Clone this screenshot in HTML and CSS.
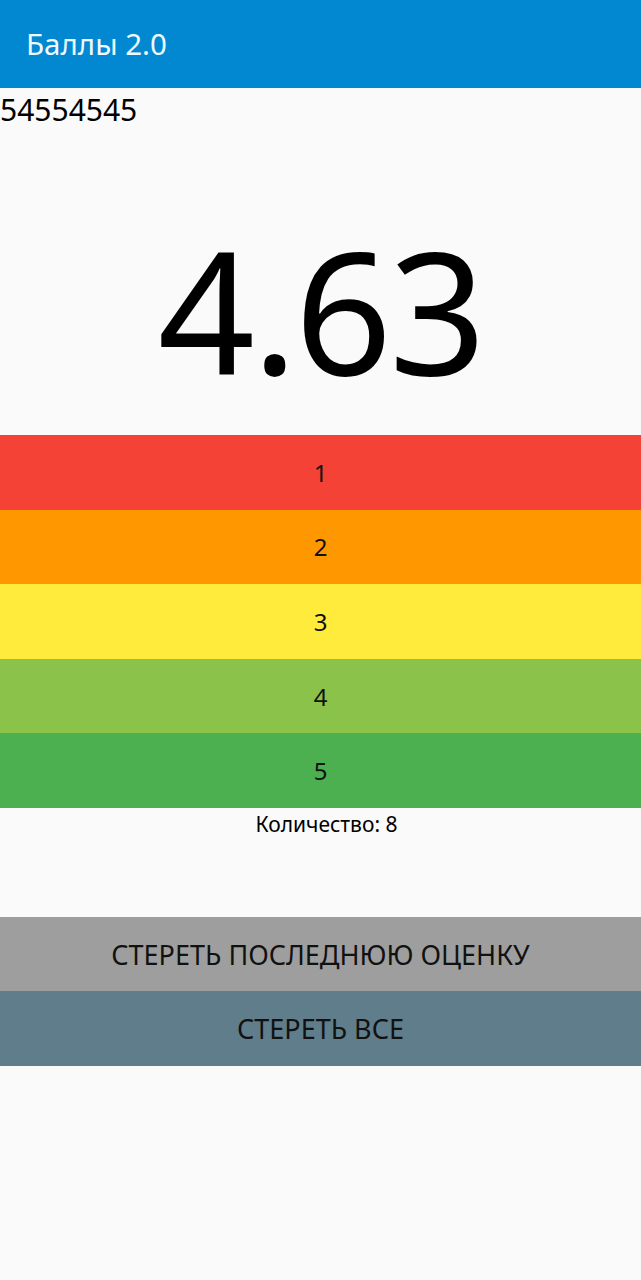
FILE: index.html
```html
<!DOCTYPE html>
<html lang="ru">
<head>
<meta charset="utf-8">
<title>Баллы 2.0</title>
<link rel="stylesheet" href="styles.css">
</head>
<body>
<header class="appbar"><span class="title">Баллы 2.0</span></header>
<main class="content">
  <div class="history">54554545</div>
  <div class="average">4.63</div>
  <div class="grades">
    <button class="grade g1">1</button>
    <button class="grade g2">2</button>
    <button class="grade g3">3</button>
    <button class="grade g4">4</button>
    <button class="grade g5">5</button>
  </div>
  <div class="count">Количество: 8</div>
  <div class="actions">
    <button class="action undo">СТЕРЕТЬ ПОСЛЕДНЮЮ ОЦЕНКУ</button>
    <button class="action clear">СТЕРЕТЬ ВСЕ</button>
  </div>
</main>
</body>
</html>
```
FILE: styles.css
```css
* { box-sizing: border-box; }
html, body { margin: 0; padding: 0; }
body {
  background: #fafafa;
  font-family: "Noto Sans", "Open Sans", sans-serif;
  color: #000;
  width: 641px;
  min-height: 1280px;
}
.appbar {
  height: 88px;
  background: #0288d1;
  display: flex;
  align-items: center;
  padding-left: 26px;
  padding-bottom: 2px;
}
.title {
  color: #eefaff;
  font-size: 29.5px;
}
.content { display: flex; flex-direction: column; }
.history {
  font-size: 30px;
  line-height: 44px;
  height: 44px;
}
.average {
  height: 303px;
  font-size: 170px;
  line-height: 1;
  text-align: center;
  padding-top: 92px;
  letter-spacing: -3px;
}
.grades { display: flex; flex-direction: column; }
.grade, .action {
  border: none;
  margin: 0;
  width: 100%;
  font-family: inherit;
  color: #111;
  display: flex;
  align-items: center;
  justify-content: center;
  padding: 0;
}
.grade { height: 74.6px; font-size: 24px; }
.g1 { background: #f44336; }
.g2 { background: #ff9800; }
.g3 { background: #ffeb3b; }
.g4 { background: #8bc34a; }
.g5 { background: #4caf50; }
.count {
  text-align: center;
  font-size: 21px;
  line-height: 32px;
  height: 109px;
  padding-left: 12px;
}
.actions { display: flex; flex-direction: column; }
.action { height: 74.5px; font-size: 27px; }
.undo { background: #9e9e9e; }
.clear { background: #607d8b; }
```
